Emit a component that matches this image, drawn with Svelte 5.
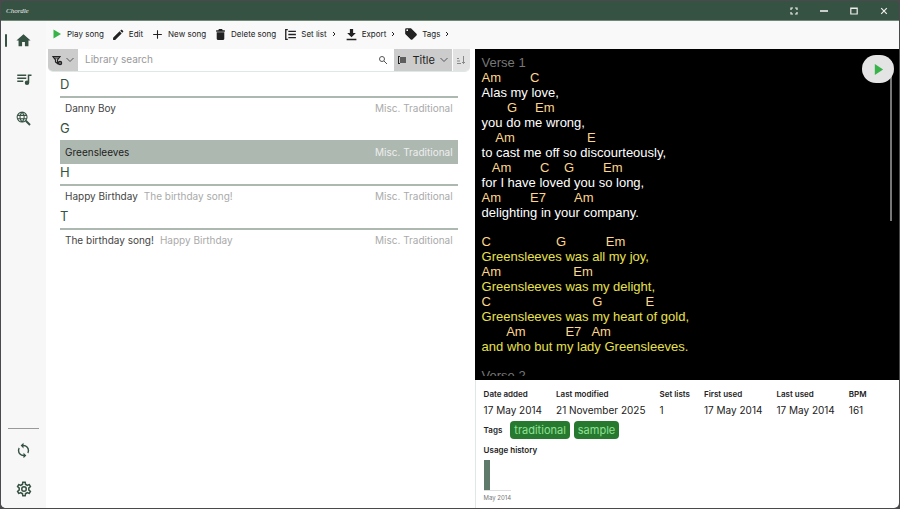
<script>
  const groups = [
    { letter: 'D', songs: [{ title: 'Danny Boy', alt: '' }] },
    { letter: 'G', songs: [{ title: 'Greensleeves', alt: '', selected: true }] },
    { letter: 'H', songs: [{ title: 'Happy Birthday', alt: 'The birthday song!' }] },
    { letter: 'T', songs: [{ title: 'The birthday song!', alt: 'Happy Birthday' }] }
  ];
  const sp = (n) => ' '.repeat(n);
  const verse = [
    ['Am' + sp(8) + 'C', 'Alas my love,'],
    [sp(7) + 'G' + sp(5) + 'Em', 'you do me wrong,'],
    [sp(4) + 'Am' + sp(20) + 'E', 'to cast me off so discourteously,'],
    [sp(3) + 'Am' + sp(8) + 'C' + sp(4) + 'G' + sp(8) + 'Em', 'for I have loved you so long,'],
    ['Am' + sp(8) + 'E7' + sp(8) + 'Am', 'delighting in your company.']
  ];
  const chorus = [
    ['C' + sp(18) + 'G' + sp(11) + 'Em', 'Greensleeves was all my joy,'],
    ['Am' + sp(20) + 'Em', 'Greensleeves was my delight,'],
    ['C' + sp(28) + 'G' + sp(12) + 'E', 'Greensleeves was my heart of gold,'],
    [sp(7) + 'Am' + sp(11) + 'E7' + sp(3) + 'Am', 'and who but my lady Greensleeves.']
  ];
  const facts = [
    ['Date added', '17 May 2014'],
    ['Last modified', '21 November 2025'],
    ['Set lists', '1'],
    ['First used', '17 May 2014'],
    ['Last used', '17 May 2014'],
    ['BPM', '161']
  ];
</script>

<div class="window">
  <header class="titlebar">
    <span class="logo">Chordle</span>
    <div class="winbtns">
      <button aria-label="Full screen"><svg width="8" height="8" viewBox="0 0 8 8"><path d="M1 3V1h2M5 1h2v2M7 5v2H5M3 7H1V5" /></svg></button>
      <button aria-label="Minimise"><svg width="8" height="8" viewBox="0 0 8 8"><path d="M0 4h8" stroke-width="1.6" /></svg></button>
      <button aria-label="Maximise"><svg width="8" height="8" viewBox="0 0 8 8"><path d="M.8 1h6.4v6H.8zM.8 1.4h6.4" /></svg></button>
      <button aria-label="Close"><svg width="8" height="8" viewBox="0 0 8 8"><path d="M1.2 1.2l5.6 5.6M6.8 1.2L1.2 6.8" /></svg></button>
    </div>
  </header>

  <div class="body">
    <nav class="side">
      <button class="active" aria-label="Home"><svg width="17" height="17" viewBox="0 0 24 24"><path d="M10 20v-6h4v6h5v-8h3L12 3 2 12h3v8z" /></svg></button>
      <button aria-label="Set lists"><svg width="18" height="18" viewBox="0 0 24 24"><path d="M15 6H3v2h12V6m0 4H3v2h12v-2M3 16h8v-2H3v2M17 6v8.18c-.31-.11-.65-.18-1-.18a3 3 0 1 0 3 3V8h3V6h-5z" /></svg></button>
      <button aria-label="Search online"><svg width="17" height="17" viewBox="0 0 24 24"><path fill="none" stroke="currentColor" stroke-width="1.5" d="M10 3a7 7 0 1 0 0 14 7 7 0 0 0 0-14zM3.6 7.6h12.8M3.6 12.4h12.8M10 3c-4 4-4 10 0 14 4-4 4-10 0-14z" /><path fill="none" stroke="currentColor" stroke-width="2.6" d="M15.2 15.2l6 6" /></svg></button>
      <div class="spacer"></div>
      <hr />
      <button aria-label="Synchronise"><svg width="17" height="17" viewBox="0 0 24 24"><path transform="matrix(-1 0 0 1 24 0)" d="M12 6v3l4-4-4-4v3a8 8 0 0 0-8 8c0 1.57.46 3.03 1.24 4.26L6.7 14.8A5.87 5.87 0 0 1 6 12a6 6 0 0 1 6-6m6.76 1.74L17.3 9.2c.44.84.7 1.8.7 2.8a6 6 0 0 1-6 6v-3l-4 4 4 4v-3a8 8 0 0 0 8-8c0-1.57-.46-3.03-1.24-4.26z" /></svg></button>
      <button aria-label="Settings"><svg width="18" height="18" viewBox="0 0 24 24"><path d="M12 8a4 4 0 0 1 4 4 4 4 0 0 1-4 4 4 4 0 0 1-4-4 4 4 0 0 1 4-4m0 2a2 2 0 0 0-2 2 2 2 0 0 0 2 2 2 2 0 0 0 2-2 2 2 0 0 0-2-2m-2 12c-.25 0-.46-.18-.5-.42l-.37-2.65c-.63-.25-1.17-.59-1.69-.99l-2.49 1.01c-.22.08-.49 0-.61-.22l-2-3.46a.493.493 0 0 1 .12-.64l2.11-1.66L4.5 12l.07-1-2.11-1.63a.493.493 0 0 1-.12-.64l2-3.46c.12-.22.39-.31.61-.22l2.49 1c.52-.39 1.06-.73 1.69-.98l.37-2.65c.04-.24.25-.42.5-.42h4c.25 0 .46.18.5.42l.37 2.65c.63.25 1.17.59 1.69.98l2.49-1c.22-.09.49 0 .61.22l2 3.46c.13.22.07.49-.12.64L19.43 11l.07 1-.07 1 2.11 1.63c.19.15.25.42.12.64l-2 3.46c-.12.22-.39.31-.61.22l-2.49-1c-.52.39-1.06.73-1.69.98l-.37 2.65c-.04.24-.25.42-.5.42h-4m1.25-18l-.37 2.61c-1.2.25-2.26.89-3.03 1.78L5.44 7.35l-.75 1.3L6.8 10.2a5.55 5.55 0 0 0 0 3.6l-2.12 1.56.75 1.3 2.43-1.04c.77.88 1.82 1.52 3.01 1.76l.37 2.62h1.52l.37-2.61c1.19-.25 2.24-.89 3.01-1.77l2.43 1.04.75-1.3-2.12-1.55c.4-1.17.4-2.44 0-3.61l2.11-1.55-.75-1.3-2.41 1.04a5.42 5.42 0 0 0-3.03-1.77L12.75 4h-1.5z" /></svg></button>
    </nav>

    <div class="main">
      <div class="toolbar">
        <button><svg class="green" width="12" height="12" viewBox="0 0 24 24"><path d="M5 3v18l15-9z" /></svg>Play song</button>
        <button><svg width="13" height="13" viewBox="0 0 24 24"><path d="M20.7 7c.4-.4.4-1 0-1.4l-2.3-2.3c-.4-.4-1-.4-1.4 0l-1.9 1.8 3.8 3.8M2 18.2V22h3.8L17.8 10 14 6.2z" /></svg>Edit</button>
        <button><svg width="13" height="13" viewBox="0 0 24 24"><path d="M20 13h-7v7h-2v-7H4v-2h7V4h2v7h7z" /></svg>New song</button>
        <button><svg width="13" height="13" viewBox="0 0 24 24"><path d="M20 4h-4l-1-2H9L8 4H4v3h16M5 8v12a2 2 0 0 0 2 2h10a2 2 0 0 0 2-2V8z" /></svg>Delete song</button>
        <button><svg width="13" height="13" viewBox="0 0 24 24"><path d="M7 2H2v20h5v-2H4.5V4H7zM8 5h14v2.5H8zM8 10.8h14v2.5H8zM8 16.5h14V19H8z" /></svg>Set list<svg class="chev" width="6" height="6" viewBox="0 0 6 6"><path d="M2 1l2 2-2 2" /></svg></button>
        <button><svg width="13" height="13" viewBox="0 0 24 24"><path d="M9 2h6v7h5l-8 8-8-8h5zM3 20h18v2.5H3z" /></svg>Export<svg class="chev" width="6" height="6" viewBox="0 0 6 6"><path d="M2 1l2 2-2 2" /></svg></button>
        <button><svg width="14" height="14" viewBox="0 0 24 24"><path d="M5.5 7A1.5 1.5 0 0 1 4 5.5 1.5 1.5 0 0 1 5.5 4 1.5 1.5 0 0 1 7 5.5 1.5 1.5 0 0 1 5.5 7m15.9 4.6l-9-9C12 2.2 11.5 2 11 2H4a2 2 0 0 0-2 2v7c0 .6.2 1.1.6 1.4l9 9c.4.4.9.6 1.4.6s1.1-.2 1.4-.6l7-7c.4-.4.6-.9.6-1.4s-.2-1.1-.6-1.4z" /></svg>Tags<svg class="chev" width="6" height="6" viewBox="0 0 6 6"><path d="M2 1l2 2-2 2" /></svg></button>
      </div>

      <div class="columns">
        <section class="library">
          <div class="search">
            <button class="filter" aria-label="Filter">
              <svg width="11" height="11" viewBox="0 0 22 22"><path fill="none" stroke="currentColor" stroke-width="2.4" d="M2 3h14l-5 7v7l-4-3v-4zM5 6h8" /><circle cx="16" cy="16" r="4.5" /><circle cx="16" cy="16" r="1.3" fill="#ccc" /></svg>
              <svg class="arrow" width="8" height="6" viewBox="0 0 8 6"><path d="M.5 1L4 4.5 7.5 1" /></svg>
            </button>
            <input type="text" placeholder="Library search" aria-label="Library search" />
            <button class="find" aria-label="Search"><svg width="10" height="10" viewBox="0 0 10 10"><circle cx="4" cy="4" r="2.5" /><path d="M6 6l3 3" /></svg></button>
            <button class="sort">
              <svg width="10" height="10" viewBox="0 0 10 10"><path d="M3 1H1v8h2V8H2V2h1z" /><path opacity=".65" d="M3 2h6v6H3z" /></svg>
              Title
              <svg class="arrow" width="8" height="6" viewBox="0 0 8 6"><path d="M.5 1L4 4.5 7.5 1" /></svg>
            </button>
            <button class="dir" aria-label="Sort direction"><svg width="10" height="10" viewBox="0 0 10 10"><path d="M1 8.5h4M1 6h3M1 3.5h2M7.5 1v7.5M6 7l1.5 1.5L9 7" /></svg></button>
          </div>
          <div class="list">
            {#each groups as g}
              <h2>{g.letter}</h2>
              {#each g.songs as s}
                <button class="song" class:selected={s.selected}>
                  <span>{s.title}</span>
                  <span class="alt">{s.alt}</span>
                  <span class="cat">Misc. Traditional</span>
                </button>
              {/each}
            {/each}
          </div>
        </section>

        <section class="preview">
          <div class="lyrics">
            <p class="label">Verse 1</p>
            {#each verse as [c, l]}
              <p class="chord">{c}</p>
              <p>{l}</p>
            {/each}
            <div class="chorus">
              {#each chorus as [c, l]}
                <p class="chord">{c}</p>
                <p>{l}</p>
              {/each}
            </div>
            <p class="label">Verse 2</p>
            <div class="thumb"></div>
            <button class="play" aria-label="Play"><svg width="13" height="13" viewBox="0 0 14 14"><path d="M3 1v12l9-6z" /></svg></button>
          </div>
          <div class="details">
            <dl>
              {#each facts as [k, v]}
                <div><dt>{k}</dt><dd>{v}</dd></div>
              {/each}
            </dl>
            <div class="tags">
              <h3>Tags</h3>
              <span class="tag">traditional</span>
              <span class="tag">sample</span>
            </div>
            <h3>Usage history</h3>
            <div class="chart">
              <div class="bar"></div>
              <span>May 2014</span>
            </div>
          </div>
        </section>
      </div>
    </div>
  </div>
</div>

<style>
  :global(body) { background: #4a4a4e; }
  * { box-sizing: border-box; margin: 0; padding: 0; }
  button { font: inherit; color: inherit; background: none; border: 0; }
  svg { display: block; flex: none; fill: currentColor; }
  .window {
    display: flex; flex-direction: column; height: 100vh; padding: 1px;
    font-family: Inter, "Noto Sans", sans-serif; font-size: 10px; color: #222;
  }
  .titlebar {
    display: flex; align-items: center; justify-content: space-between; flex: none;
    height: 20px; padding-left: 5px; background: #365243; color: #eee;
    border-bottom: 1px solid #718879; border-radius: 4px 4px 0 0;
  }
  .logo { font: italic 7px "Liberation Serif", serif; }
  .winbtns { display: flex; }
  .winbtns button { width: 30px; display: flex; justify-content: center; }
  .winbtns svg { fill: none; stroke: #eee; stroke-width: 1.2; }
  .body { flex: 1; display: flex; min-height: 0; background: #fff; border-radius: 0 0 5px 5px; overflow: hidden; }
  .side { width: 45px; flex: none; display: flex; flex-direction: column; gap: 1px; background: #f7f7f7; color: #365243; }
  .side button { height: 38px; display: flex; align-items: center; justify-content: center; position: relative; }
  .side .active::before { content: ""; position: absolute; left: 4px; top: 13px; width: 2px; height: 13px; border-radius: 1px; background: #365243; }
  .side hr { border: 0; border-top: 1px solid #999; margin: 0 7px 1px; }
  .spacer { flex: 1; }
  .main { flex: 1; min-width: 0; display: flex; flex-direction: column; }
  .toolbar { height: 28px; flex: none; display: flex; align-items: center; gap: 8px; padding: 0 0 2px 5px; background: #f9f9f9; font-size: 8px; }
  .toolbar button { display: flex; align-items: center; gap: 4px; white-space: nowrap; }
  .toolbar .green, .play svg { color: #38b34a; }
  .toolbar .chev { fill: none; stroke: #222; }
  .columns { flex: 1; min-height: 0; display: grid; grid-template-columns: 101fr 100fr; grid-template-rows: minmax(0, 1fr); }
  .library { min-width: 0; }
  .search { display: flex; height: 23px; margin: 0 5px 0 2px; border-bottom: 1px solid #dfe8e5; border-radius: 0 0 5px 5px; overflow: hidden; }
  .search button { display: flex; align-items: center; justify-content: center; }
  .search .filter { width: 30px; gap: 3px; background: #ccc; }
  .search input { flex: 1; min-width: 0; border: 0; outline: 0; padding: 0 7px 2px; font: 10px Inter, sans-serif; }
  .search input::placeholder { color: #999; }
  .find { width: 22px; }
  .find svg, .arrow, .dir svg { fill: none; stroke: #555; }
  .search .sort { width: 58px; gap: 5px; background: #ccc; font-size: 11px; }
  .search .dir { width: 17px; margin-left: 1px; background: #e2e2e2; }
  .dir svg { stroke: #888; }
  .list { padding: 4px 17px 0 14px; }
  h2 { font-size: 13px; line-height: 16px; padding-bottom: 4px; font-weight: 400; color: #365243; border-bottom: 2px solid #adb8b1; }
  .song { width: 100%; height: 22px; padding: 0 5px 2px; display: flex; align-items: center; gap: 6px; white-space: nowrap; }
  .song span:first-child { color: #444; }
  .song .alt { color: #aaa; }
  .song .cat { margin-left: auto; color: #aaa; }
  .song.selected { background: #adb8b1; }
  .song.selected span:first-child { color: #222; }
  .song.selected .cat { color: #eee; }
  .preview { min-width: 0; display: flex; flex-direction: column; }
  .lyrics { position: relative; flex: 1; min-height: 0; overflow: hidden; background: #000; color: #fff; padding: 6px 7px 0; border-bottom: 4px solid #000; font: 13px/15px "Liberation Sans", Arial, sans-serif; }
  .lyrics p { white-space: pre; min-height: 15px; }
  .lyrics .chord { color: #ffd68a; }
  .lyrics .label { color: #777; }
  .chorus { margin: 14px 0; color: #e8e04c; }
  .thumb { position: absolute; right: 7px; top: 12px; width: 2px; height: 160px; background: #777; }
  .play { position: absolute; right: 5px; top: 6px; width: 32px; height: 28px; border-radius: 14px; background: #e4e4e4; display: flex; align-items: center; justify-content: center; }
  .details { flex: none; padding: 8px 8px 5px; border-left: 1px solid #dfe8e5; }
  dl { display: flex; gap: 14px; }
  dt, h3 { font-size: 8px; line-height: 12px; font-weight: 600; white-space: nowrap; }
  dd { font-size: 10px; line-height: 20px; white-space: nowrap; }
  .tags { display: flex; align-items: center; gap: 4px; margin: 1px 0 5px; }
  .tags h3 { margin-right: 4px; }
  .tag { background: #26792f; color: #90e093; border-radius: 4px; padding: 0 4px; line-height: 18px; font-size: 11px; }
  .chart { display: flex; flex-direction: column; align-items: flex-start; margin-top: 4px; }
  .chart span { border-top: 1px solid #ddd; padding-top: 2px; font-size: 6px; line-height: 10px; color: #777; }
  .bar { width: 6px; height: 30px; background: #5f7a6b; }
</style>
